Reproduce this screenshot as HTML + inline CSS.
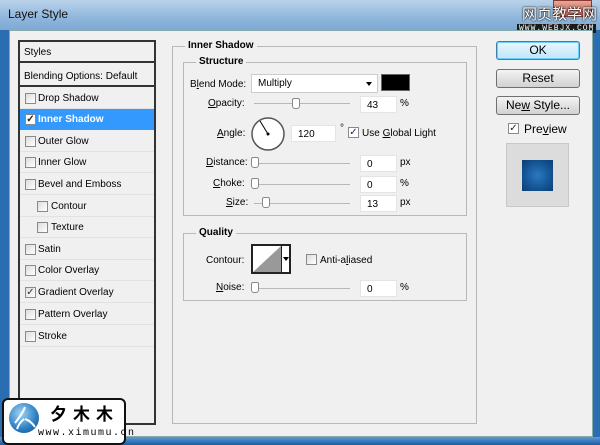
<!DOCTYPE html>
<html><head><meta charset="utf-8"><style>
*{margin:0;padding:0;box-sizing:border-box}
body{width:600px;height:445px;overflow:hidden;position:relative;font-family:"Liberation Sans",Arial,sans-serif;font-size:10px;color:#000;background:#2a6db0}
.a{position:absolute}
#title{left:0;top:0;width:600px;height:30px;background:linear-gradient(#b9d3ea,#8fb6dc 60%,#7ea9d4)}
#body{left:9px;top:30px;width:584px;height:407px;background:#f0f0f0;border:1px solid #8aa;}
#bot{left:0;top:437px;width:600px;height:8px;background:linear-gradient(#5b9ad6,#1d5aa0)}
.lbl{white-space:nowrap}
.cb{position:absolute;width:11px;height:11px;border:1px solid #8a8a8a;background:linear-gradient(135deg,#ddd,#fff)}
.row{position:absolute;left:20px;width:134px;height:21px;border-bottom:1px solid #e2e2e2}
.row span{position:absolute;top:5px}
.fld{position:absolute;height:17px;background:#fff;border:1px solid #e4e4e4;padding:3px 0 0 6px}
.sl{position:absolute;height:1px;background:#b8b8b8}
.th{position:absolute;width:8px;height:11px;border:1px solid #888;border-radius:2px 2px 3px 3px;background:#fff}
.gb{position:absolute;border:1px solid #b8b8b8}
.gt{position:absolute;background:#f0f0f0;font-weight:bold;padding:0 3px;font-size:10px}
.btn{position:absolute;left:496px;width:84px;height:19px;border:1px solid #707070;border-radius:3px;background:linear-gradient(#f4f4f4,#e2e2e2 50%,#d2d2d2);text-align:center;font-size:12px;line-height:17px}
u{text-decoration:underline}
</style></head><body>
<div id="title" class="a"></div>
<div class="a lbl" style="left:8px;top:7px;font-size:12px;color:#111">Layer Style</div>
<div class="a" style="left:553px;top:0;width:39px;height:17px;background:linear-gradient(#e8a89a,#c0584a);border-radius:0 0 4px 4px;border:1px solid #8a3a30"></div>
<div class="a lbl" style="left:522px;top:6px;font-size:15px;color:#fff;font-family:'Noto Sans CJK SC',sans-serif;text-shadow:0 0 2px #000,0 0 1px #000;line-height:15px">网页教学网</div>
<div class="a lbl" style="left:517px;top:24px;font-size:8px;color:#fff;background:#1a1a1a;padding:0 2px;letter-spacing:1px;line-height:9px;font-family:'Liberation Mono',monospace">WWW.WEBJX.COM</div>
<div id="body" class="a"></div>
<div id="bot" class="a"></div>

<div class="a" style="left:18px;top:40px;width:138px;height:385px;border:2px solid #333;background:#f0f0f0"></div>
<div class="a" style="left:20px;top:42px;width:134px;height:21px;border-bottom:2px solid #333"></div>
<div class="a lbl" style="left:24px;top:47px">Styles</div>
<div class="a" style="left:20px;top:65px;width:134px;height:22px;border-bottom:2px solid #333"></div>
<div class="a lbl" style="left:24px;top:71px">Blending Options: Default</div>

<div class="row" style="top:88px"><div class="cb" style="left:5px;top:5px"></div><span style="left:18px">Drop Shadow</span></div>
<div class="row" style="top:109px;background:#3399ff;color:#fff;font-weight:bold;border:none;height:21px"><div class="cb" style="left:5px;top:5px;background:#fff;font-size:10px;color:#222;line-height:9px;text-align:center;font-weight:bold">✓</div><span style="left:18px">Inner Shadow</span></div>
<div class="row" style="top:131px"><div class="cb" style="left:5px;top:5px"></div><span style="left:18px">Outer Glow</span></div>
<div class="row" style="top:152px"><div class="cb" style="left:5px;top:5px"></div><span style="left:18px">Inner Glow</span></div>
<div class="row" style="top:174px"><div class="cb" style="left:5px;top:5px"></div><span style="left:18px">Bevel and Emboss</span></div>
<div class="row" style="top:196px"><div class="cb" style="left:17px;top:5px"></div><span style="left:31px">Contour</span></div>
<div class="row" style="top:217px"><div class="cb" style="left:17px;top:5px"></div><span style="left:31px">Texture</span></div>
<div class="row" style="top:239px"><div class="cb" style="left:5px;top:5px"></div><span style="left:18px">Satin</span></div>
<div class="row" style="top:260px"><div class="cb" style="left:5px;top:5px"></div><span style="left:18px">Color Overlay</span></div>
<div class="row" style="top:282px"><div class="cb" style="left:5px;top:5px;font-size:10px;line-height:9px;text-align:center;color:#333">✓</div><span style="left:18px">Gradient Overlay</span></div>
<div class="row" style="top:304px"><div class="cb" style="left:5px;top:5px"></div><span style="left:18px">Pattern Overlay</span></div>
<div class="row" style="top:326px"><div class="cb" style="left:5px;top:5px"></div><span style="left:18px">Stroke</span></div>

<div class="gb" style="left:172px;top:46px;width:305px;height:378px"></div>
<div class="gt" style="left:185px;top:40px">Inner Shadow</div>
<div class="gb" style="left:183px;top:62px;width:284px;height:154px"></div>
<div class="gt" style="left:196px;top:56px">Structure</div>

<div class="a lbl" style="left:190px;top:79px">B<u>l</u>end Mode:</div>
<div class="fld" style="left:251px;top:74px;width:127px;height:19px;border-color:#ccc">Multiply</div>
<div class="a" style="left:366px;top:82px;width:0;height:0;border-left:3px solid transparent;border-right:3px solid transparent;border-top:4px solid #000"></div>
<div class="a" style="left:381px;top:74px;width:29px;height:17px;background:#000;border:1px solid #666"></div>

<div class="a lbl" style="left:208px;top:98px"><u>O</u>pacity:</div>
<div class="sl" style="left:254px;top:103px;width:96px"></div><div class="th" style="left:292px;top:98px"></div>
<div class="fld" style="left:360px;top:96px;width:37px">43</div><div class="a" style="left:400px;top:98px">%</div>

<div class="a lbl" style="left:217px;top:128px"><u>A</u>ngle:</div>
<svg class="a" style="left:250px;top:116px" width="36" height="36"><circle cx="18" cy="18" r="16" fill="#fff" stroke="#555" stroke-width="1.5"/><line x1="18" y1="18" x2="10" y2="5" stroke="#000" stroke-width="1"/><circle cx="18" cy="18" r="1.5" fill="#000"/></svg>
<div class="fld" style="left:291px;top:125px;width:45px">120</div>
<div class="a" style="left:340px;top:123px;font-size:10px">°</div>
<div class="cb" style="left:348px;top:127px;background:#fff;font-size:10px;line-height:9px;text-align:center;color:#225">✓</div>
<div class="a lbl" style="left:362px;top:128px">Use <u>G</u>lobal Light</div>

<div class="a lbl" style="left:206px;top:157px"><u>D</u>istance:</div>
<div class="sl" style="left:254px;top:163px;width:96px"></div><div class="th" style="left:251px;top:157px"></div>
<div class="fld" style="left:360px;top:155px;width:37px">0</div><div class="a" style="left:400px;top:157px">px</div>
<div class="a lbl" style="left:213px;top:178px"><u>C</u>hoke:</div>
<div class="sl" style="left:254px;top:184px;width:96px"></div><div class="th" style="left:251px;top:178px"></div>
<div class="fld" style="left:360px;top:176px;width:37px">0</div><div class="a" style="left:400px;top:178px">%</div>
<div class="a lbl" style="left:226px;top:197px"><u>S</u>ize:</div>
<div class="sl" style="left:254px;top:203px;width:96px"></div><div class="th" style="left:262px;top:197px"></div>
<div class="fld" style="left:360px;top:195px;width:37px">13</div><div class="a" style="left:400px;top:197px">px</div>

<div class="gb" style="left:183px;top:233px;width:284px;height:68px"></div>
<div class="gt" style="left:196px;top:227px">Quality</div>
<div class="a lbl" style="left:206px;top:255px">Contour:</div>
<div class="a" style="left:251px;top:244px;width:40px;height:30px;border:2px solid #222;background:#fff"></div>
<svg class="a" style="left:253px;top:246px" width="28" height="26"><polygon points="0,26 28,0 28,26" fill="#999"/></svg>
<div class="a" style="left:281px;top:246px;width:1px;height:26px;background:#222"></div>
<div class="a" style="left:283px;top:257px;border-left:3px solid transparent;border-right:3px solid transparent;border-top:4px solid #000"></div>
<div class="cb" style="left:306px;top:254px"></div>
<div class="a lbl" style="left:320px;top:255px">Anti-a<u>l</u>iased</div>
<div class="a lbl" style="left:216px;top:282px"><u>N</u>oise:</div>
<div class="sl" style="left:254px;top:288px;width:96px"></div><div class="th" style="left:251px;top:282px"></div>
<div class="fld" style="left:360px;top:280px;width:37px">0</div><div class="a" style="left:400px;top:282px">%</div>

<div class="btn" style="top:41px;border-color:#3c7fb1;background:linear-gradient(#eaf6fd,#d4eefc 50%,#bee6fd);box-shadow:inset 0 0 0 1px #6cd0ff">OK</div>
<div class="btn" style="top:69px">Reset</div>
<div class="btn" style="top:96px">Ne<u>w</u> Style...</div>
<div class="cb" style="left:508px;top:123px;background:#fff;font-size:10px;line-height:9px;text-align:center;color:#225">✓</div>
<div class="a lbl" style="left:524px;top:122px;font-size:12px">Pre<u>v</u>iew</div>
<div class="a" style="left:506px;top:143px;width:63px;height:64px;background:#dcdcdc;border:1px solid #c8c8c8"></div>
<div class="a" style="left:522px;top:160px;width:31px;height:31px;background:radial-gradient(#2a78c0,#104e8c 70%,#0b3f75)"></div>

<div class="a" style="left:2px;top:398px;width:124px;height:47px;background:#fff;border:2px solid #111;border-radius:6px"></div>
<div class="a" style="left:9px;top:403px;width:30px;height:30px;border-radius:50%;background:radial-gradient(circle at 40% 35%,#9fd4f5,#2a7cc0 60%,#0d4c8a)"></div>
<svg class="a" style="left:9px;top:403px" width="30" height="30"><path d="M6 20 Q14 10 16 4 M16 16 Q22 18 26 24 M15 16 Q10 20 8 26" stroke="#fff" stroke-width="2" fill="none"/></svg>
<div class="a lbl" style="left:50px;top:403px;font-size:17px;font-weight:bold;letter-spacing:6px;font-family:'Noto Sans CJK SC',sans-serif;line-height:20px">夕木木</div>
<div class="a lbl" style="left:38px;top:428px;font-size:10px;letter-spacing:1.5px;font-family:'Liberation Mono',monospace">www.ximumu.cn</div>
</body></html>
